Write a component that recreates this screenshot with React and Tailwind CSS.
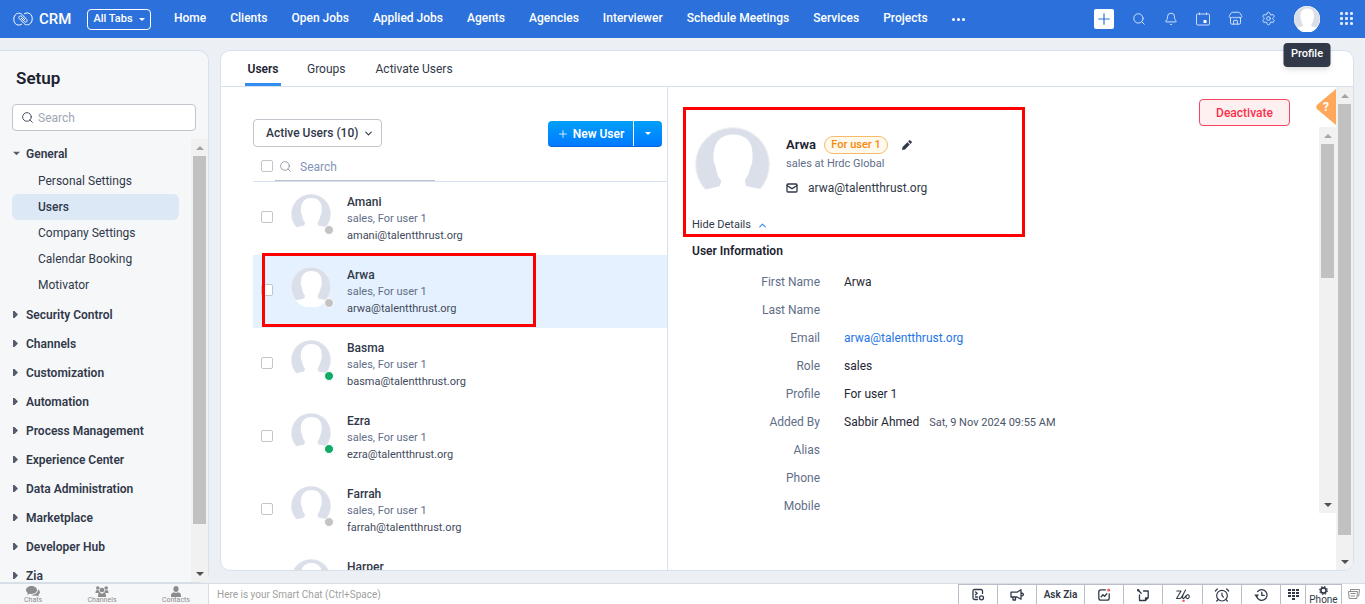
import {
    AlarmClock,
    Bell,
    ChevronDown,
    ChevronUp,
    Mail,
    Plus,
    Search,
    Settings,
    Store,
} from 'lucide-react';
import clsx from 'clsx';

const navTabs = [
    'Home',
    'Clients',
    'Open Jobs',
    'Applied Jobs',
    'Agents',
    'Agencies',
    'Interviewer',
    'Schedule Meetings',
    'Services',
    'Projects',
];

const generalItems = ['Personal Settings', 'Users', 'Company Settings', 'Calendar Booking', 'Motivator'];

const sections = [
    'Security Control',
    'Channels',
    'Customization',
    'Automation',
    'Process Management',
    'Experience Center',
    'Data Administration',
    'Marketplace',
    'Developer Hub',
    'Zia',
];

const users = [
    { name: 'Amani', role: 'sales, For user 1', email: 'amani@talentthrust.org', online: false },
    { name: 'Arwa', role: 'sales, For user 1', email: 'arwa@talentthrust.org', online: false, selected: true },
    { name: 'Basma', role: 'sales, For user 1', email: 'basma@talentthrust.org', online: true },
    { name: 'Ezra', role: 'sales, For user 1', email: 'ezra@talentthrust.org', online: true },
    { name: 'Farrah', role: 'sales, For user 1', email: 'farrah@talentthrust.org', online: false },
    { name: 'Harper', online: false },
];

const details = [
    { label: 'First Name', value: 'Arwa' },
    { label: 'Last Name' },
    { label: 'Email', value: 'arwa@talentthrust.org', link: true },
    { label: 'Role', value: 'sales' },
    { label: 'Profile', value: 'For user 1' },
    { label: 'Added By', value: 'Sabbir Ahmed', note: 'Sat, 9 Nov 2024 09:55 AM' },
    { label: 'Alias' },
    { label: 'Phone' },
    { label: 'Mobile' },
];

const Logo = () => (
    <svg viewBox="0 0 20 14" className="h-[14px] w-5" fill="none" stroke="currentColor" strokeWidth="1" strokeLinecap="round">
        <path d="M8.6 12.3C6.6 13.6 4 13.4 2.3 11.6C0.3 9.6 0.2 5.2 2.1 3C4 0.8 7 0.6 9 2.5L13.6 7.3C14.4 8.1 14.4 9.1 13.6 9.7C12.9 10.3 12 10.2 11.4 9.6L8.3 6.3" />
        <path d="M11.4 1.7C13.4 0.4 16 0.6 17.7 2.4C19.7 4.4 19.8 8.8 17.9 11C16 13.2 13 13.4 11 11.5L6.4 6.7C5.6 5.9 5.6 4.9 6.4 4.3C7.1 3.7 8 3.8 8.6 4.4L11.7 7.7" />
    </svg>
);

const Caret = ({ className, up }) => (
    <svg viewBox="0 0 8 4" className={className} fill="currentColor">
        <path d={up ? 'M0 4L4 0L8 4Z' : 'M0 0L4 4L8 0Z'} />
    </svg>
);

const RightCaret = () => (
    <svg viewBox="0 0 5 7" className="h-[7px] w-[5px] text-[#555c6b]" fill="currentColor">
        <path d="M0 0H1.5L5 3.5L1.5 7H0Z" />
    </svg>
);

const Avatar = ({ className }) => (
    <svg viewBox="0 0 40 40" className={className}>
        <circle cx="20" cy="20" r="20" fill="#f0f0f2" />
        <circle cx="20" cy="20" r="19.4" fill="#dadfea" />
        <path
            d="M3.4 30.5L4.6 33.6L13 31.6C14 30 14 29 13.8 28.3C12 26.5 11.5 24 11 21C9.7 19 9.6 16 10 13.5C10.6 7 15 4 20.3 4C26 4 30.6 7 30.6 13.5C31 17 30.5 19.5 29.5 21.5C29 24 28.4 26 26.8 28C26.4 30 27 31 27.6 31.6L35.6 33.2A19.6 19.6 0 0 1 4.6 33.6Z"
            fill="#fff"
        />
    </svg>
);

// always visible scroll bar with square buttons at both ends
const Scrollbar = ({ thumb }) => (
    <div className="flex w-[17px] shrink-0 flex-col items-center bg-[#f1f1f1]">
        <div className="flex h-[17px] shrink-0 items-center">
            <Caret up className="h-1 w-2 text-[#a3a3a3]" />
        </div>
        <div className="min-h-0 flex-1">
            <div className={clsx('w-[13px] bg-[#c1c1c1]', thumb)} />
        </div>
        <div className="flex h-[17px] shrink-0 items-center">
            <Caret className="h-1 w-2 text-[#505050]" />
        </div>
    </div>
);

const Header = () => (
    <header className="flex h-[38px] shrink-0 items-center bg-[#2c71db] pl-[13px] pr-3 text-white">
        <Logo />
        <span className="ml-[6px] w-[48px] text-[15px] font-medium">CRM</span>
        <button className="flex h-[21px] w-16 shrink-0 items-center justify-center gap-[6px] rounded border border-white text-[11px] font-medium">
            All Tabs
            <Caret className="h-[3px] w-[6px]" />
        </button>
        <nav className="ml-[23px] flex items-center gap-6 whitespace-nowrap pb-[2px] text-xs font-medium">
            {navTabs.map((tab) => (
                <a key={tab} href="#">
                    {tab}
                </a>
            ))}
            <button aria-label="More tabs" className="flex gap-[2px] pt-[3px]">
                <span className="size-[3px] rounded-full bg-white" />
                <span className="size-[3px] rounded-full bg-white" />
                <span className="size-[3px] rounded-full bg-white" />
            </button>
        </nav>
        <div className="ml-auto flex items-center gap-[18px] pb-px text-[#dbe7fa]">
            <button aria-label="Create" className="flex size-5 items-center justify-center rounded-xs bg-white text-[#2c71db]">
                <Plus size={18} strokeWidth={1.6} />
            </button>
            <button aria-label="Search">
                <Search size={14} strokeWidth={1.6} />
            </button>
            <button aria-label="Notifications">
                <Bell size={14} strokeWidth={1.6} />
            </button>
            <button aria-label="Calendar">
                <svg viewBox="0 0 14 14" className="size-[14px]" fill="none" stroke="currentColor" strokeWidth="0.9">
                    <path d="M3.5 0.5V3M10.5 0.5V3M1.5 2H12.5Q13.5 2 13.5 3V12Q13.5 13 12.5 13H1.5Q0.5 13 0.5 12V3Q0.5 2 1.5 2Z" />
                    <rect x="7.5" y="8" width="3" height="3" rx="0.5" fill="#fff" stroke="none" />
                </svg>
            </button>
            <button aria-label="Marketplace">
                <Store size={15} strokeWidth={1.5} />
            </button>
            <button aria-label="Settings">
                <Settings size={15} strokeWidth={1.5} />
            </button>
            <div className="relative mr-[2px]">
                <button aria-label="Profile" className="block rounded-full bg-white">
                    <Avatar className="size-[26px]" />
                </button>
                <div role="tooltip" className="absolute left-1/2 top-[37px] z-20 flex h-6 w-[47px] -translate-x-1/2 items-center justify-center rounded bg-[#313949] text-[11px] font-medium text-white shadow-md">
                    Profile
                </div>
            </div>
            <button aria-label="Apps" className="grid grid-cols-3 gap-[2px]">
                {[0, 1, 2, 3, 4, 5, 6, 7, 8].map((dot) => (
                    <span key={dot} className="size-[3px] rounded-[1px] bg-current" />
                ))}
            </button>
        </div>
    </header>
);

const Sidebar = () => (
    <aside className="flex w-[209px] shrink-0 flex-col rounded-r-[10px] border border-l-0 border-[#d6e1f0] bg-[#f6f7f9]">
        <h1 className="ml-4 mt-[15px] text-[17px] leading-6 font-semibold text-[#1c2230]">Setup</h1>
        <label className="ml-3 mr-3 mt-[14px] flex h-[27px] items-center gap-1 rounded border border-[#c0c6cc] bg-white px-2">
            <Search size={13} strokeWidth={1.8} className="shrink-0 text-[#444b5a]" />
            <input
                aria-label="Search settings"
                placeholder="Search"
                className="w-full text-xs outline-none placeholder:text-[#9ea6b4]"
            />
        </label>
        <div className="mt-2 flex min-h-0 flex-1">
            <nav className="min-w-0 flex-1 overflow-hidden pr-3 text-xs text-[#313949]">
                <button className="ml-[13px] flex h-[29px] items-center gap-[6px] font-semibold">
                    <Caret className="h-[5px] w-[7px] text-[#555c6b]" />
                    General
                </button>
                <div className="mb-[2px]">
                    {generalItems.map((item) => (
                        <a
                            key={item}
                            href="#"
                            className={clsx(
                                'ml-3 flex h-[26px] items-center rounded-md pl-[26px]',
                                item === 'Users' && 'bg-[#dce8f6] font-medium'
                            )}
                        >
                            {item}
                        </a>
                    ))}
                </div>
                {sections.map((section) => (
                    <button key={section} className="ml-[13px] flex h-[29px] items-center gap-2 font-semibold">
                        <RightCaret />
                        {section}
                    </button>
                ))}
            </nav>
            <Scrollbar thumb="h-[90%]" />
        </div>
    </aside>
);

const UserRow = ({ user }) => (
    <li className={clsx('relative flex h-[73px] shrink-0 pl-2 pt-3', user.selected && 'bg-[#e5f1fe]')}>
        <input
            type="checkbox"
            aria-label={`Select ${user.name}`}
            className="mt-[17px] size-3 appearance-none rounded-xs border border-[#c0c6cc] bg-white"
        />
        <div className="relative ml-[18px] size-10">
            <Avatar className="size-10" />
            <span
                className={clsx(
                    'absolute -bottom-px -right-[3px] size-[10px] rounded-full border border-white',
                    user.online ? 'bg-[#12aa67]' : 'bg-[#c4c4c4]'
                )}
            />
        </div>
        <div className="ml-4 text-[11px] leading-[17px]">
            <div className="text-xs leading-4 font-medium text-[#313949]">{user.name}</div>
            {user.role && <div className="text-[#616e88]">{user.role}</div>}
            {user.email && <div className="text-[#414a5c]">{user.email}</div>}
        </div>
        {user.selected && (
            <div className="pointer-events-none absolute -top-[2px] left-[9px] h-[74px] w-[274px] border-3 border-[#ff0000]" />
        )}
    </li>
);

const UserList = () => (
    <section className="flex w-[447px] shrink-0 flex-col overflow-hidden border-r border-[#d6e0ee] pl-8">
        <div className="mt-8 flex items-start justify-between pr-[5px]">
            <div className="relative">
                <select
                    aria-label="User filter"
                    className="h-7 w-[129px] appearance-none rounded border border-[#c0c6cc] bg-white pl-3 text-xs font-medium text-[#313949]"
                >
                    <option>Active Users (10)</option>
                </select>
                <ChevronDown size={11} strokeWidth={2.4} className="pointer-events-none absolute right-2 top-[9px] text-[#313949]" />
            </div>
            <div className="mt-[2px] flex h-[26px] overflow-hidden rounded border-b border-[#0064d8] bg-linear-to-b from-[#02a0f8] to-[#0279ff] text-xs font-semibold text-white">
                <button className="flex w-[85px] items-center justify-center gap-1">
                    <Plus size={12} strokeWidth={1.6} />
                    New User
                </button>
                <button aria-label="More options" className="flex w-[29px] items-center justify-center border-l border-white">
                    <Caret className="h-[3px] w-[6px]" />
                </button>
            </div>
        </div>
        <div className="mt-[6px] flex h-[29px] shrink-0 border-b border-[#d6e0ee] pl-2">
            <input
                type="checkbox"
                aria-label="Select all users"
                className="mt-[7px] size-3 appearance-none rounded-xs border border-[#c0c6cc] bg-white"
            />
            <label className="ml-[2px] flex w-40 items-center gap-2 border-b border-[#bcc2c9] pl-1">
                <Search size={13} strokeWidth={1.5} className="shrink-0 text-[#868d99]" />
                <input
                    aria-label="Search users"
                    placeholder="Search"
                    className="w-full text-xs outline-none placeholder:text-[#8294b8]"
                />
            </label>
        </div>
        <ul className="flex min-h-0 flex-1 flex-col">
            {users.map((user) => (
                <UserRow key={user.name} user={user} />
            ))}
        </ul>
    </section>
);

const UserDetails = () => (
    <section className="flex min-w-0 flex-1">
        <div className="flex min-w-0 flex-1 flex-col">
            <div className="flex h-10 shrink-0 items-start justify-end">
                <button className="mr-[26px] mt-3 h-[27px] w-[91px] rounded border border-[#f9465f] bg-[#fef0f1] text-xs font-medium text-[#f9304c]">
                    Deactivate
                </button>
                <button aria-label="Help" className="mt-[2px]">
                    <svg viewBox="0 0 20 36" className="h-9 w-5">
                        <path d="M20 0V36L1.2 20.2Q-0.8 18 1.2 15.8Z" fill="#ffa85c" />
                        <text x="7" y="22" fill="#fff" fontSize="12" fontWeight="700">
                            ?
                        </text>
                    </svg>
                </button>
            </div>
            <div className="mb-[57px] flex min-h-0 flex-1">
                <div className="relative min-w-0 flex-1 pl-6">
                    <div className="pointer-events-none absolute -top-5 left-[15px] h-[130px] w-[342px] border-3 border-[#ff0000]" />
                    <div className="ml-[3px] flex h-[89px]">
                        <Avatar className="size-[75px]" />
                        <div className="ml-4 pt-2 text-[11px]">
                            <div className="flex h-5 items-center">
                                <h2 className="text-[13px] font-semibold text-[#1c2230]">Arwa</h2>
                                <span className="ml-2 flex h-[18px] w-16 items-center justify-center rounded-full border border-[#f5bd67] bg-[#fff8ec] font-medium text-[#f58a0b]">
                                    For user 1
                                </span>
                                <button aria-label="Edit user" className="ml-[14px] text-[#313949]">
                                    <svg viewBox="0 0 10 10" className="size-[10px]" fill="currentColor">
                                        <path d="M0 10L0.6 7L5.4 2.2L7.8 4.6L3 9.4ZM6.1 1.5L7.2 0.4Q7.8 -0.2 8.4 0.4L9.6 1.6Q10.2 2.2 9.6 2.8L8.5 3.9Z" />
                                    </svg>
                                </button>
                            </div>
                            <p className="leading-[18px] text-[#616e88]">sales at Hrdc Global</p>
                            <p className="mt-[6px] flex items-center gap-[10px] text-xs leading-[18px] text-[#313949]">
                                <Mail size={12} strokeWidth={2.6} />
                                arwa@talentthrust.org
                            </p>
                        </div>
                    </div>
                    <button className="flex h-[18px] items-center gap-[6px] text-[11px] text-[#313949]">
                        Hide Details
                        <ChevronUp size={11} strokeWidth={2.4} className="text-[#338cf0]" />
                    </button>
                    <h3 className="mt-[7px] text-xs font-semibold leading-5 text-[#1c2230]">User Information</h3>
                    <dl className="mt-[7px] text-xs leading-7">
                        {details.map((row) => (
                            <div key={row.label} className="flex h-7 gap-6">
                                <dt className="w-32 text-right text-[#616e88]">{row.label}</dt>
                                <dd className="text-[#1f2733]">
                                    {row.link ? (
                                        <a href="#" className="text-[#2476e6]">
                                            {row.value}
                                        </a>
                                    ) : (
                                        row.value
                                    )}
                                    {row.note && <span className="ml-[10px] text-[11px] text-[#4c566b]">{row.note}</span>}
                                </dd>
                            </div>
                        ))}
                    </dl>
                </div>
                <Scrollbar thumb="h-[38%]" />
            </div>
        </div>
        <Scrollbar thumb="h-[96%]" />
    </section>
);

const ChatIcon = () => (
    <svg viewBox="0 0 14 11" className="h-[11px] w-[14px]" fill="currentColor">
        <path d="M5.5 0C2.5 0 0 1.8 0 4C0 5.2 0.7 6.2 1.8 7L1.2 9L3.6 7.8C8 8.4 11 6.5 11 4C11 1.8 8.5 0 5.5 0ZM12 3.5C12 7 8.5 9 5.2 8.8C6.5 9.8 8.5 10 10.3 9.6L12.8 10.8L12.3 8.8C14.6 7.2 14.4 4.8 12 3.5Z" />
    </svg>
);

const ChannelsIcon = () => (
    <svg viewBox="0 0 14 11" className="h-[11px] w-[14px]" fill="currentColor">
        <circle cx="2.8" cy="2" r="1.8" />
        <circle cx="11.2" cy="2" r="1.8" />
        <circle cx="7" cy="4" r="2.3" />
        <path d="M1 4.2H4L5 7H0.4ZM13 4.2H10L9 7H13.6ZM3 11V9Q3.2 6.8 5.2 6.6L7 8L8.8 6.6Q10.8 6.8 11 9V11Z" />
    </svg>
);

const ContactsIcon = () => (
    <svg viewBox="0 0 12 11" className="h-[11px] w-3" fill="currentColor">
        <ellipse cx="6" cy="3" rx="2.6" ry="3" />
        <path d="M1 11V9Q1 7 4 6.2L6 7L8 6.2Q11 7 11 9V11Z" />
    </svg>
);

const ToolIcon = ({ children }) => (
    <svg viewBox="0 0 14 14" className="size-[14px]" fill="none" stroke="currentColor" strokeWidth="1.3" strokeLinecap="round" strokeLinejoin="round">
        {children}
    </svg>
);

const tools = [
    {
        label: 'Form',
        width: 'w-[39px]',
        icon: (
            <ToolIcon>
                <path d="M11.5 5.5V3Q11.5 1.5 10 1.5H3.5Q2 1.5 2 3V10Q2 11.5 3.5 11.5H6.5M4.5 4L6.2 5.3L4.5 6.8M4.5 9H6.5" />
                <circle cx="10.5" cy="9.8" r="2" />
            </ToolIcon>
        ),
    },
    {
        label: 'Announcements',
        width: 'w-[39px]',
        icon: (
            <ToolIcon>
                <path d="M11 1.8V11.2L7 9H1V4.2H7ZM11 5Q13.4 5 13.4 6.5Q13.4 8 11 8M3 9V12H5.5V9" />
            </ToolIcon>
        ),
    },
    { label: 'Ask Zia', width: 'w-[48px]', icon: 'Ask Zia' },
    {
        label: 'Signals',
        width: 'w-[39px]',
        icon: (
            <ToolIcon>
                <path d="M8.5 1.8H4Q1.8 1.8 1.8 4V10Q1.8 12.2 4 12.2H10Q12.2 12.2 12.2 10V6M4.2 8.8L6 6.8L7.6 8.2L9.8 5.8" />
                <circle cx="11.7" cy="2.2" r="1.4" fill="#f4565c" stroke="none" />
            </ToolIcon>
        ),
    },
    {
        label: 'Sticky notes',
        width: 'w-[39px]',
        icon: (
            <ToolIcon>
                <path d="M7.5 3H12.2V9.8L9.5 12.5H3.5V7M12 9.8H9.5V12.3M2 2L5.2 5.2" />
                <circle cx="2.2" cy="2.2" r="1.2" fill="currentColor" stroke="none" />
            </ToolIcon>
        ),
    },
    {
        label: 'Zia assistant',
        width: 'w-10',
        icon: (
            <ToolIcon>
                <path
                    strokeWidth="1.1"
                    d="M0.8 3H5L0.6 10.5H3.6Q5 10.5 6 8.5L9.6 2M7.4 6L6.4 9Q6.2 10.8 7.8 10.2Q9.2 9.4 10 7.8M13.2 8.5Q13 6.3 11.4 6.8Q9.8 7.8 10 9.6Q10.8 11.2 12.3 10.3Q13.4 9.5 13.2 8.5"
                />
                <circle cx="7.6" cy="12.7" r="1.3" fill="#f4565c" stroke="none" />
            </ToolIcon>
        ),
    },
    { label: 'Reminders', width: 'w-[39px]', icon: <AlarmClock size={16} strokeWidth={1.8} /> },
    {
        label: 'Recent items',
        width: 'w-[39px]',
        icon: (
            <ToolIcon>
                <path d="M2.6 8.4A5.3 5.3 0 1 0 3.6 3.6M7.8 4.2V7.4H10.2" />
                <path d="M0.2 6.6L2.6 9.8L5 6.6Z" fill="currentColor" stroke="none" />
            </ToolIcon>
        ),
    },
    {
        label: 'Dial pad',
        width: 'w-[25px]',
        icon: (
            <svg viewBox="0 0 11 12" className="h-3 w-[11px]" fill="currentColor">
                <path d="M0 0H3V2H0ZM4 0H7V2H4ZM8 0H11V2H8ZM0 3H3V5H0ZM4 3H7V5H4ZM8 3H11V5H8ZM0 6H3V8H0ZM4 6H7V8H4ZM8 6H11V8H8ZM4 9H7V11H4Z" />
            </svg>
        ),
    },
];

const Footer = () => (
    <footer className="z-10 flex h-[21px] shrink-0 border-t border-[#d9dce1] bg-white text-[#313949]">
        <div className="flex w-[209px] shrink-0 justify-between border-r border-[#d9dce1] bg-[#f6f7f9] pl-6 pr-[18px] text-[7px] leading-[7px] text-[#8c8c8c]">
            <button className="flex flex-col items-center pt-[2px]">
                <ChatIcon />
                Chats
            </button>
            <button className="flex flex-col items-center pt-[2px]">
                <ChannelsIcon />
                Channels
            </button>
            <button className="flex flex-col items-center pt-[2px]">
                <ContactsIcon />
                Contacts
            </button>
        </div>
        <input
            aria-label="Smart chat"
            placeholder="Here is your Smart Chat (Ctrl+Space)"
            className="min-w-0 flex-1 px-2 text-[10px] outline-none placeholder:text-[#a0a0a0]"
        />
        <div className="flex text-[10px]">
            {tools.map((tool) => (
                <button
                    key={tool.label}
                    aria-label={tool.label}
                    className={clsx('flex items-center justify-center border-l border-t border-[#b9bdc9] font-semibold', tool.width)}
                >
                    {tool.icon}
                </button>
            ))}
            <button className="flex w-[37px] flex-col items-center justify-start border-x border-t border-[#b9bdc9] pt-px leading-[9px]">
                <svg viewBox="0 0 10 10" className="size-[9px] shrink-0" fill="none" stroke="currentColor">
                    <circle cx="5" cy="5" r="2.9" strokeWidth="1.8" />
                    <circle cx="5" cy="5" r="4.3" strokeWidth="1.2" strokeDasharray="1.7 1.68" />
                </svg>
                Phone
            </button>
            <button aria-label="Windows" className="flex w-[23px] items-center justify-center text-[#8c8c8c]">
                <svg viewBox="0 0 12 12" className="size-3" fill="none" stroke="currentColor">
                    <path d="M2.5 3V1.5H11.5L10.8 8H9.5M0.5 3.5H9.5L8.8 10.5H1.2ZM2.5 5.5H7.5M2.5 8H7" />
                </svg>
            </button>
        </div>
    </footer>
);

const App = () => {
    return (
        <div className="flex h-screen flex-col overflow-hidden bg-[#ecf0f5] font-['Roboto','Liberation_Sans',sans-serif]">
            <Header />
            <div className="flex min-h-0 flex-1 pt-3">
                <Sidebar />
                <main className="mb-3 ml-[11px] mr-[11px] flex min-w-0 flex-1 flex-col overflow-hidden rounded-[10px] border border-[#d6e1f0] bg-white">
                    <nav className="flex h-9 shrink-0 items-stretch border-b border-[#d6e0ee] pl-6 text-xs text-[#313949]">
                        <a href="#" className="flex w-9 items-center justify-center border-b-3 border-[#338cf0] pt-[3px] font-semibold text-[#1c2230]">
                            Users
                        </a>
                        <a href="#" className="ml-[26px] flex items-center">
                            Groups
                        </a>
                        <a href="#" className="ml-[30px] flex items-center">
                            Activate Users
                        </a>
                    </nav>
                    <div className="flex min-h-0 flex-1">
                        <UserList />
                        <UserDetails />
                    </div>
                </main>
            </div>
            <Footer />
        </div>
    );
};

export default App;
